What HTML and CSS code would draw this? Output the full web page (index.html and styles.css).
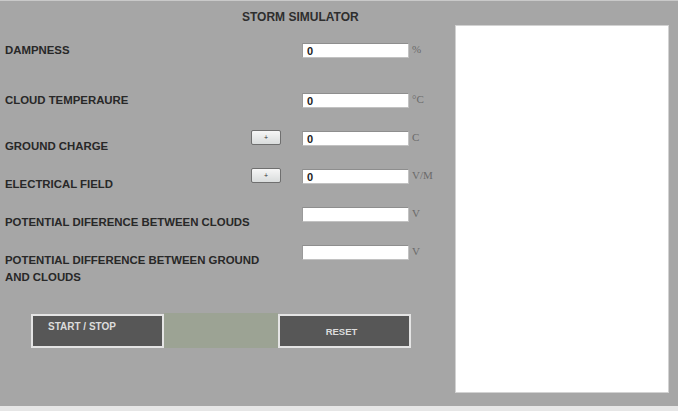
FILE: index.html
```
<!DOCTYPE html>
<html lang="en">
<head>
    <meta charset="UTF-8">
    <title>Storm Simulator</title>
    <link rel="stylesheet" href="styles.css">
</head>
<body>
    <div class="app">
        <!--参数面板-->
        <div class="form">
            <h1 class="title">STORM SIMULATOR</h1>
            <div class="row row-wide">
                <label class="name">DAMPNESS</label>
                <span></span>
                <input class="field" type="text" value="0" readonly>
                <span class="unit">%</span>
            </div>
            <div class="row">
                <label class="name">CLOUD TEMPERAURE</label>
                <span></span>
                <input class="field" type="text" value="0" readonly>
                <span class="unit">&deg;C</span>
            </div>
            <div class="row row-low">
                <label class="name">GROUND CHARGE</label>
                <button class="step">+</button>
                <input class="field" type="text" value="0" readonly>
                <span class="unit">C</span>
            </div>
            <div class="row row-low">
                <label class="name">ELECTRICAL FIELD</label>
                <button class="step">+</button>
                <input class="field" type="text" value="0" readonly>
                <span class="unit">V/M</span>
            </div>
            <div class="row row-low">
                <label class="name">POTENTIAL DIFERENCE BETWEEN CLOUDS</label>
                <span></span>
                <input class="field" type="text" readonly>
                <span class="unit">V</span>
            </div>
            <div class="row row-low row-last">
                <label class="name name-wrap">POTENTIAL DIFFERENCE BETWEEN GROUND AND CLOUDS</label>
                <span></span>
                <input class="field" type="text" readonly>
                <span class="unit">V</span>
            </div>
            <!--控制按钮-->
            <div class="controls">
                <button class="ctl ctl-start">START / STOP</button>
                <div class="lamp"></div>
                <button class="ctl ctl-reset">RESET</button>
            </div>
        </div>
        <!--画布-->
        <div class="canvas"></div>
    </div>
</body>
</html>
```

FILE: styles.css
```
/**页面**/
body{
    margin: 0;
    background-color: #e6e6e6;
    font-family: "Liberation Sans", Arial, sans-serif;
}
.app{
    display: flex;
    box-sizing: border-box;
    width: 678px;
    height: 406px;
    border-top: 1px solid #c9c9c9;
    background-color: #a6a6a6;
}
/**左侧表单**/
.form{
    box-sizing: border-box;
    width: 455px;
    padding-left: 5px;
}
.title{
    margin: 0;
    padding: 9px 0 0 237px;
    font-size: 12px;
    line-height: 14px;
    font-weight: bold;
    color: #2e2e2e;
}
.row{
    display: grid;
    grid-template-columns: 246px 30px 107px auto;
    align-items: start;
    height: 38px;
}
.row-wide{
    margin-top: 19px;
    height: 50px;
}
.row-last{
    height: auto;
}
.name{
    font-size: 11.4px;
    line-height: 14px;
    font-weight: bold;
    color: #282828;
    white-space: nowrap;
}
.row-low .name{
    padding-top: 8px;
}
.row-low .name-wrap{
    padding-top: 7px;
    width: 262px;
    line-height: 17px;
    white-space: normal;
}
.field{
    box-sizing: border-box;
    width: 107px;
    height: 15px;
    margin: 0 0 0 21px;
    padding: 0 0 0 4px;
    border: 1px solid #c2c2c2;
    border-top-color: #8e8e8e;
    border-left-color: #9a9a9a;
    background-color: #fff;
    font-family: "Liberation Sans", Arial, sans-serif;
    font-size: 11px;
    font-weight: bold;
    color: #222;
    outline: none;
}
.unit{
    margin-left: 24px;
    font-family: "Liberation Serif", "Times New Roman", serif;
    font-size: 11px;
    line-height: 13px;
    color: #6a6a6a;
}
.step{
    box-sizing: border-box;
    width: 30px;
    height: 15px;
    margin-top: -1px;
    padding: 0;
    border: 1px solid #6f6f6f;
    border-radius: 2px;
    background: linear-gradient(#f6f6f6, #d9dcdc);
    font-size: 7px;
    line-height: 12px;
    color: #333;
}
/**底部按钮**/
.controls{
    display: flex;
    margin: 28px 0 0 26px;
    height: 35px;
}
.ctl{
    box-sizing: border-box;
    width: 133px;
    height: 34px;
    padding: 0;
    border: 2px solid #e4e4e4;
    background-color: #575757;
    font-family: "Liberation Sans", Arial, sans-serif;
    font-weight: bold;
    color: #dcdcdc;
}
.ctl-start{
    display: flex;
    align-items: flex-start;
    padding: 5px 0 0 15px;
    font-size: 10px;
    line-height: 12px;
}
.ctl-reset{
    padding-right: 6px;
    font-size: 9.5px;
}
.lamp{
    width: 114px;
    height: 35px;
    margin-top: -1px;
    background-color: #9ca394;
}
/**右侧画布**/
.canvas{
    box-sizing: border-box;
    width: 214px;
    height: 368px;
    margin-top: 24px;
    border: 1px solid #d2d2d2;
    background-color: #fff;
}
```
